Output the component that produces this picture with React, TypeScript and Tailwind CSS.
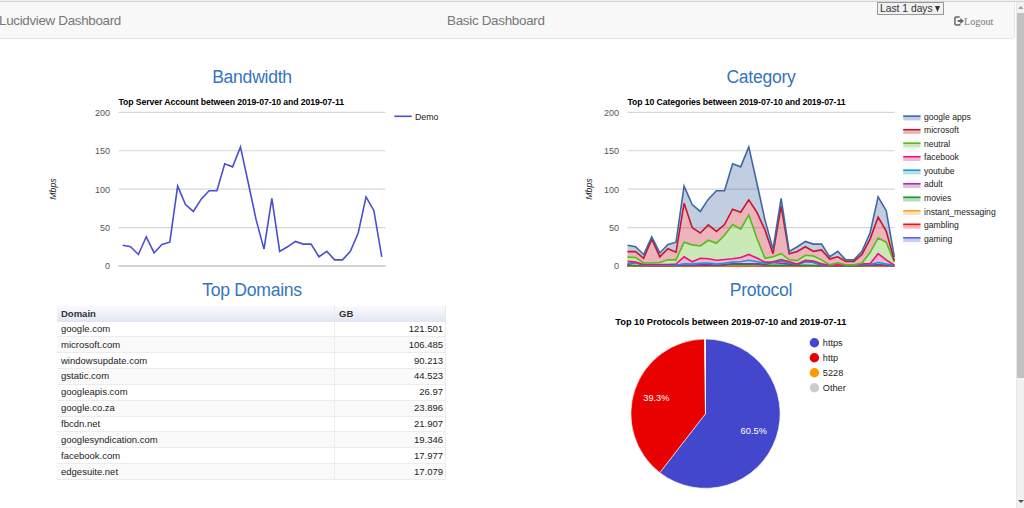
import React, { useState } from 'react';

interface Series {
  name: string;
  color: string;
  values: number[];
}

const PLOT_TOP = 22.3;
const PLOT_BOTTOM = 176;
const TICKS = [200, 150, 100, 50, 0];

const totals = [27, 25, 15, 38, 17, 28, 31, 104, 80, 71, 87, 98, 98, 133, 129, 155, 108, 60, 22, 88, 19, 25, 32, 28.5, 28.5, 12, 19, 8, 8, 19, 43, 90, 72, 12];

// values are already stacked, outermost series first
const categories: Series[] = [
  { name: 'google apps', color: '#3f68a3', values: totals },
  { name: 'microsoft', color: '#c6152f', values: [18.7, 18.7, 10, 35, 12, 22.5, 18, 81.5, 50, 43, 53.5, 45, 54, 74, 70, 86, 70, 47, 16, 78, 16, 19, 25, 19, 21, 9, 12, 6, 6, 15, 35, 63.5, 45.5, 7] },
  { name: 'neutral', color: '#57bb1c', values: [11.5, 11, 4, 4, 4.5, 8, 8, 31, 27.5, 26, 33.5, 29.5, 40, 54, 48, 66.5, 36, 10, 12, 16, 8, 7, 14, 13, 8, 1.5, 4, 1.5, 1.5, 4, 17.5, 36.5, 31, 5] },
  { name: 'facebook', color: '#ea1479', values: [6, 5, 2, 2, 2, 2, 2.5, 12, 5.5, 10, 9.5, 7.5, 8.5, 9.5, 11, 15, 10.5, 5, 5.5, 8.5, 5.5, 2.5, 7.5, 6.5, 3, 1, 1.5, 1, 1, 3, 3, 16, 8, 1] },
  { name: 'youtube', color: '#149acb', values: [3, 4.5, 1, 1, 1, 1, 1, 3, 2.5, 3.5, 4, 2.5, 3.5, 5, 5.5, 7.5, 5.5, 3.5, 5, 6.5, 4, 2, 6, 4.5, 2, 0.8, 0.8, 0.8, 0.8, 2, 2, 4.5, 2.5, 0.5] },
  { name: 'adult', color: '#a02ba6', values: [1.5, 4.5, 1, 0.8, 0.8, 0.8, 0.8, 1, 1, 1.5, 1.5, 1, 2, 3, 3, 3, 3, 2, 4.5, 3.5, 2.5, 1.5, 6, 5, 1, 0.5, 0.5, 0.5, 0.5, 1, 1, 2, 1, 0.4] },
  { name: 'movies', color: '#1c962f', values: [0.6, 0.6, 0.4, 0.4, 0.4, 0.4, 0.4, 0.6, 0.6, 0.8, 0.8, 0.6, 1, 2, 1.8, 2, 1.6, 0.8, 0.8, 1, 0.8, 0.6, 0.8, 0.6, 0.4, 0.3, 0.3, 0.3, 0.3, 0.4, 0.6, 0.8, 0.6, 0.3] },
  { name: 'instant_messaging', color: '#fb9f24', values: totals.map(() => 0.3) },
  { name: 'gambling', color: '#e91515', values: totals.map(() => 0.2) },
  { name: 'gaming', color: '#5c5fd6', values: totals.map(() => 0.1) },
];

const domains = [
  ['google.com', '121.501'],
  ['microsoft.com', '106.485'],
  ['windowsupdate.com', '90.213'],
  ['gstatic.com', '44.523'],
  ['googleapis.com', '26.97'],
  ['google.co.za', '23.896'],
  ['fbcdn.net', '21.907'],
  ['googlesyndication.com', '19.346'],
  ['facebook.com', '17.977'],
  ['edgesuite.net', '17.079'],
];

const protocols = [
  { name: 'https', color: '#4347cb' },
  { name: 'http', color: '#e90000' },
  { name: '5228', color: '#ff9900' },
  { name: 'Other', color: '#cccccc' },
];

const toY = (value: number) => PLOT_BOTTOM - (value / 200) * (PLOT_BOTTOM - PLOT_TOP);

const toPoints = (values: number[], x: number, step: number) =>
  values.map((v, i) => `${(x + i * step).toFixed(2)},${toY(v).toFixed(2)}`).join(' ');

interface AxesProps {
  title: string;
  titleWidth: number;
  left: number;
  right: number;
  labelX: number;
}

const Axes: React.FC<AxesProps> = ({ title, titleWidth, left, right, labelX }) => (
  <>
    <text x={left} y={15.3} fontSize={8.7} fontWeight="bold" fill="#000" textLength={titleWidth}>{title}</text>
    {TICKS.map(tick => (
      <g key={tick}>
        <line x1={left} x2={right} y1={toY(tick)} y2={toY(tick)} stroke={tick === 0 ? '#a5a5a5' : '#d6d6d6'} strokeWidth={1.2} />
        <text x={left - 8.5} y={toY(tick) + 3.4} fontSize={9} fill="#555" textAnchor="end">{tick}</text>
      </g>
    ))}
    <text transform={`translate(${labelX} 99) rotate(-90)`} fontSize={8.7} fontStyle="italic" fill="#222" textAnchor="middle">Mbps</text>
  </>
);

const BandwidthChart = () => (
  <svg width={504} height={185} className="block">
    <Axes title="Top Server Account between 2019-07-10 and 2019-07-11" titleWidth={225.5} left={118.5} right={385.5} labelX={56} />
    <polyline points={toPoints(totals, 122.7, 7.85)} fill="none" stroke="#4b4fce" strokeWidth={1.6} />
    <line x1={394.3} x2={411.7} y1={26.3} y2={26.3} stroke="#4b4fce" strokeWidth={1.6} />
    <text x={415} y={29.6} fontSize={8.8} fill="#222">Demo</text>
  </svg>
);

const CategoryChart = () => (
  <svg width={510} height={185} className="block">
    <Axes title="Top 10 Categories between 2019-07-10 and 2019-07-11" titleWidth={218} left={121.5} right={388.3} labelX={86} />
    {categories.map((s, i) => {
      const next = categories[i + 1];
      const lower = next ? next.values : totals.map(() => 0);
      const top = toPoints(s.values, 121.5, 8.085);
      const bottom = toPoints(lower, 121.5, 8.085).split(' ').reverse().join(' ');
      return <polygon key={s.name} points={`${top} ${bottom}`} fill={s.color} fillOpacity={0.32} />;
    })}
    {[...categories].reverse().map(s => (
      <polyline key={s.name} points={toPoints(s.values, 121.5, 8.085)} fill="none" stroke={s.color} strokeWidth={1.6} />
    ))}
    {categories.map((s, i) => (
      <g key={s.name}>
        <rect x={397.2} y={25.2 + i * 13.52} width={17.3} height={5.2} fill={s.color} fillOpacity={0.32} />
        <line x1={397.2} x2={414.5} y1={26.2 + i * 13.52} y2={26.2 + i * 13.52} stroke={s.color} strokeWidth={1.5} />
        <text x={418} y={29.6 + i * 13.57} fontSize={8.6} fill="#222">{s.name}</text>
      </g>
    ))}
  </svg>
);

const CX = 199.5;
const CY = 107.7;
const RADIUS = 74.6;

const slicePath = (from: number, to: number) => {
  const point = (t: number) => `${CX + RADIUS * Math.sin(t * 2 * Math.PI)} ${CY - RADIUS * Math.cos(t * 2 * Math.PI)}`;
  return `M${CX} ${CY} L${point(from)} A${RADIUS} ${RADIUS} 0 ${to - from > 0.5 ? 1 : 0} 1 ${point(to)} Z`;
};

const ProtocolChart = () => (
  <svg width={510} height={190} className="block">
    <text x={109.3} y={19.2} fontSize={9.3} fontWeight="bold" fill="#000" textLength={231}>Top 10 Protocols between 2019-07-10 and 2019-07-11</text>
    <g stroke="#fff" strokeWidth={0.6}>
      <path d={slicePath(0, 0.605)} fill="#4347cb" />
      <path d={slicePath(0.605, 0.998)} fill="#e90000" />
      <path d={slicePath(0.998, 1)} fill="#ccc" />
    </g>
    <g fontSize={9.2} fill="#fff">
      <text x={137.3} y={94.8} textLength={26}>39.3%</text>
      <text x={234.6} y={128} textLength={26.3}>60.5%</text>
    </g>
    {protocols.map((p, i) => (
      <g key={p.name}>
        <circle cx={308.4} cy={36.8 + i * 15} r={4.7} fill={p.color} />
        <text x={316.8} y={40 + i * 15} fontSize={9.2} fill="#222">{p.name}</text>
      </g>
    ))}
  </svg>
);

const LogoutIcon = () => (
  <svg width={10} height={10} viewBox="0 0 10 10" className="-mt-0.5 shrink-0">
    <path d="M5.7 1.1H2.1Q.9 1.1 .9 2.3V7.7Q.9 8.9 2.1 8.9H5.7V7.7" fill="none" stroke="#666" strokeWidth={1.5} />
    <path d="M3.7 3.9H6.3V2L10 5L6.3 8V6.1H3.7Z" fill="#666" />
  </svg>
);

const Heading = ({ children }: { children: React.ReactNode }) => (
  <h2 className="h-6 text-center text-[17.6px] leading-6 tracking-[-0.27px] text-[#3575bd]">{children}</h2>
);

const Navbar = () => {
  const [range] = useState('Last 1 days');

  return (
    <nav className="flex h-[37px] w-[1015px] shrink-0 items-start rounded-br border-r border-b border-[#e5e5e5] bg-[#f8f8f8] text-[#777]">
      <span className="-ml-px w-[448px] pt-[9px] text-[13.4px] leading-5 tracking-[-0.32px] whitespace-nowrap">Lucidview Dashboard</span>
      <span className="w-[430px] pt-[9px] text-[13.4px] leading-5 tracking-[-0.29px]">Basic Dashboard</span>
      <button className="flex h-[13px] w-[67px] items-center justify-between border border-[#999] bg-[#f1f1f1] pt-px pr-[3px] pl-0.5 text-[10.3px] leading-none whitespace-nowrap text-[#333]">
        {range}
        <svg width={5} height={6} viewBox="0 0 5 6"><path d="M0 0H5L2.5 6Z" fill="#333" /></svg>
      </button>
      <a className="mt-3 ml-2.5 flex items-center font-['Liberation_Serif',serif] text-[10.2px] leading-4">
        <LogoutIcon />
        Logout
      </a>
    </nav>
  );
};

const DomainTable = () => (
  <table className="ml-[57px] w-[389px] table-fixed border-separate border-spacing-0 text-[9.5px] text-[#222]">
    <thead>
      <tr className="h-[15.5px] bg-linear-to-b from-[#fafafd] to-[#e1e6f2] text-left leading-[14px] text-[#333]">
        <th className="w-[278px] border-r border-[#e9e9ed] p-0 pl-1">Domain</th>
        <th className="border-r border-[#e9e9ed] p-0 pl-1">GB</th>
      </tr>
    </thead>
    <tbody>
      {domains.map(([name, size]) => (
        <tr key={name} className="h-[15.85px] leading-[14px] even:bg-[#fafafa]">
          <td className="border-r border-b border-[#ececec] p-0 pl-1">{name}</td>
          <td className="border-r border-b border-[#ececec] p-0 pr-0.5 text-right">{size}</td>
        </tr>
      ))}
    </tbody>
  </table>
);

const Scrollbar = () => (
  <div className="flex w-2 shrink-0 flex-col items-end border-l border-[#e8e8e8] bg-[#f1f1f1]">
    <svg width={7} height={11} className="shrink-0"><path d="M1 7H6.5L3.8 4Z" fill="#a0a0a0" /></svg>
    <div className="h-[365px] w-[7px] bg-[#c1c1c1]" />
    <svg width={7} height={11} className="mt-auto shrink-0"><path d="M1 3H7L4 6Z" fill="#505050" /></svg>
  </div>
);

const App: React.FC = () => {
  return (
    <div className="flex h-[508px] w-[1024px] flex-col overflow-hidden bg-white font-['Liberation_Sans',Arial,sans-serif]">
      <div className="h-0.5 shrink-0 border-b border-[#d4d4d4] bg-[#eee]" />
      <div className="flex min-h-0 flex-1">
        <main className="w-[1016px] shrink-0">
          <Navbar />
          <div className="flex gap-0.5 pt-[26px]">
            <section className="w-[504px]">
              <Heading>Bandwidth</Heading>
              <div className="-mt-[3px] h-[192px] pt-1">
                <BandwidthChart />
              </div>
              <Heading>Top Domains</Heading>
              <div className="pt-1">
                <DomainTable />
              </div>
            </section>
            <section className="w-[510px]">
              <Heading>Category</Heading>
              <div className="-mt-[3px] h-[192px] pt-1">
                <CategoryChart />
              </div>
              <Heading>Protocol</Heading>
              <div className="pt-1">
                <ProtocolChart />
              </div>
            </section>
          </div>
        </main>
        <Scrollbar />
      </div>
    </div>
  );
};

export default App;
